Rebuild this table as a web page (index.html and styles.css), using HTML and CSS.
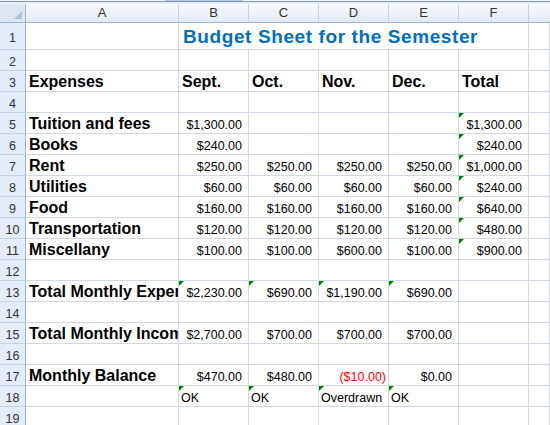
FILE: index.html
```html
<!DOCTYPE html>
<html lang="en">
<head>
<meta charset="utf-8">
<title>Budget Sheet for the Semester</title>
<link rel="stylesheet" href="styles.css">
</head>
<body>
<div class="topbar"><div class="topbar-seg"></div></div>
<div class="sheet">
  <div class="row colhdr">
    <div class="corner"></div>
    <div class="ch">A</div><div class="ch">B</div><div class="ch">C</div><div class="ch">D</div><div class="ch">E</div><div class="ch">F</div><div class="ch last"></div>
  </div>

  <div class="row r-title">
    <div class="rh">1</div><div class="c"></div>
    <div class="c title">Budget Sheet for the Semester</div>
    <div class="c"></div>
  </div>

  <div class="row">
    <div class="rh">2</div><div class="c"></div><div class="c"></div><div class="c"></div><div class="c"></div><div class="c"></div><div class="c"></div><div class="c"></div>
  </div>

  <div class="row">
    <div class="rh">3</div>
    <div class="c lbl">Expenses</div>
    <div class="c lbl">Sept.</div>
    <div class="c lbl">Oct.</div>
    <div class="c lbl">Nov.</div>
    <div class="c lbl">Dec.</div>
    <div class="c lbl">Total</div>
    <div class="c"></div>
  </div>

  <div class="row">
    <div class="rh">4</div><div class="c"></div><div class="c"></div><div class="c"></div><div class="c"></div><div class="c"></div><div class="c"></div><div class="c"></div>
  </div>

  <div class="row">
    <div class="rh">5</div>
    <div class="c lbl">Tuition and fees</div>
    <div class="c num">$1,300.00</div>
    <div class="c"></div><div class="c"></div><div class="c"></div>
    <div class="c num flag">$1,300.00</div>
    <div class="c"></div>
  </div>

  <div class="row">
    <div class="rh">6</div>
    <div class="c lbl">Books</div>
    <div class="c num">$240.00</div>
    <div class="c"></div><div class="c"></div><div class="c"></div>
    <div class="c num flag">$240.00</div>
    <div class="c"></div>
  </div>

  <div class="row">
    <div class="rh">7</div>
    <div class="c lbl">Rent</div>
    <div class="c num">$250.00</div>
    <div class="c num">$250.00</div>
    <div class="c num">$250.00</div>
    <div class="c num">$250.00</div>
    <div class="c num flag">$1,000.00</div>
    <div class="c"></div>
  </div>

  <div class="row">
    <div class="rh">8</div>
    <div class="c lbl">Utilities</div>
    <div class="c num">$60.00</div>
    <div class="c num">$60.00</div>
    <div class="c num">$60.00</div>
    <div class="c num">$60.00</div>
    <div class="c num flag">$240.00</div>
    <div class="c"></div>
  </div>

  <div class="row">
    <div class="rh">9</div>
    <div class="c lbl">Food</div>
    <div class="c num">$160.00</div>
    <div class="c num">$160.00</div>
    <div class="c num">$160.00</div>
    <div class="c num">$160.00</div>
    <div class="c num flag">$640.00</div>
    <div class="c"></div>
  </div>

  <div class="row">
    <div class="rh">10</div>
    <div class="c lbl">Transportation</div>
    <div class="c num">$120.00</div>
    <div class="c num">$120.00</div>
    <div class="c num">$120.00</div>
    <div class="c num">$120.00</div>
    <div class="c num flag">$480.00</div>
    <div class="c"></div>
  </div>

  <div class="row">
    <div class="rh">11</div>
    <div class="c lbl">Miscellany</div>
    <div class="c num">$100.00</div>
    <div class="c num">$100.00</div>
    <div class="c num">$600.00</div>
    <div class="c num">$100.00</div>
    <div class="c num flag">$900.00</div>
    <div class="c"></div>
  </div>

  <div class="row">
    <div class="rh">12</div><div class="c"></div><div class="c"></div><div class="c"></div><div class="c"></div><div class="c"></div><div class="c"></div><div class="c"></div>
  </div>

  <div class="row">
    <div class="rh">13</div>
    <div class="c lbl">Total Monthly Expenses</div>
    <div class="c num flag">$2,230.00</div>
    <div class="c num flag">$690.00</div>
    <div class="c num flag">$1,190.00</div>
    <div class="c num flag">$690.00</div>
    <div class="c"></div><div class="c"></div>
  </div>

  <div class="row">
    <div class="rh">14</div><div class="c"></div><div class="c"></div><div class="c"></div><div class="c"></div><div class="c"></div><div class="c"></div><div class="c"></div>
  </div>

  <div class="row">
    <div class="rh">15</div>
    <div class="c lbl">Total Monthly Income</div>
    <div class="c num">$2,700.00</div>
    <div class="c num">$700.00</div>
    <div class="c num">$700.00</div>
    <div class="c num">$700.00</div>
    <div class="c"></div><div class="c"></div>
  </div>

  <div class="row">
    <div class="rh">16</div><div class="c"></div><div class="c"></div><div class="c"></div><div class="c"></div><div class="c"></div><div class="c"></div><div class="c"></div>
  </div>

  <div class="row">
    <div class="rh">17</div>
    <div class="c lbl">Monthly Balance</div>
    <div class="c num">$470.00</div>
    <div class="c num">$480.00</div>
    <div class="c num neg">($10.00)</div>
    <div class="c num">$0.00</div>
    <div class="c"></div><div class="c"></div>
  </div>

  <div class="row">
    <div class="rh">18</div>
    <div class="c"></div>
    <div class="c txt flag">OK</div>
    <div class="c txt flag">OK</div>
    <div class="c txt flag">Overdrawn</div>
    <div class="c txt flag">OK</div>
    <div class="c"></div><div class="c"></div>
  </div>

  <div class="row">
    <div class="rh">19</div><div class="c"></div><div class="c"></div><div class="c"></div><div class="c"></div><div class="c"></div><div class="c"></div><div class="c"></div>
  </div>
</div>
</body>
</html>
```

FILE: styles.css
```css
:root {
  --cols: 26px 153px 70px 70px 70px 70px 70px 1fr;
  --grid: #d0d7e5;
  --hdr-edge: #9eb6ce;
  --hdr-sep: #c5d2e0;
}

html, body {
  margin: 0;
  padding: 0;
  background: #ffffff;
  overflow: hidden;
}

body {
  width: 550px;
  height: 425px;
  font-family: "Liberation Sans", Arial, sans-serif;
  color: #000;
}

.topbar {
  height: 4px;
  background: linear-gradient(#f4f6f9 0 1px, #8195ad 1px 2px, #e9eff7 2px 4px);
}

.topbar-seg {
  margin-left: 165px;
  width: 78px;
  height: 1px;
  background: #b9cbe0;
}

.sheet {
  display: flex;
  flex-direction: column;
}

.row {
  display: grid;
  grid-template-columns: var(--cols);
  height: 21px;
}

.r-title {
  height: 27px;
}

/* column header */
.colhdr {
  height: 19px;
}

.ch {
  box-sizing: border-box;
  border-right: 1px solid var(--hdr-sep);
  border-bottom: 1px solid var(--hdr-edge);
  background: linear-gradient(#f7f9fc, #e3e9f2);
  text-align: center;
  font-size: 13px;
  line-height: 18px;
  color: #333;
}

.ch.last {
  border-right: none;
}

.corner {
  box-sizing: border-box;
  position: relative;
  border-right: 1px solid var(--hdr-edge);
  border-bottom: 1px solid var(--hdr-edge);
  background: #dde6f1;
}

.corner::after {
  content: "";
  position: absolute;
  right: 3px;
  bottom: 3px;
  border-left: 8px solid transparent;
  border-bottom: 8px solid #b4c3d6;
}

/* row header */
.rh {
  box-sizing: border-box;
  display: flex;
  align-items: center;
  justify-content: center;
  padding-top: 4px;
  border-right: 1px solid var(--hdr-edge);
  border-bottom: 1px solid var(--hdr-sep);
  background: #e4ecf7;
  font-size: 12.5px;
  line-height: 14px;
  color: #333;
}

/* cells */
.c {
  box-sizing: border-box;
  position: relative;
  display: flex;
  align-items: flex-end;
  padding: 0 2px 1px;
  border-right: 1px solid var(--grid);
  border-bottom: 1px solid var(--grid);
  overflow: hidden;
  white-space: nowrap;
  font-size: 12.5px;
  line-height: 14px;
}

.title {
  grid-column: span 5;
  padding-left: 4px;
  color: #0070c0;
  font-size: 19px;
  font-weight: bold;
  line-height: 22px;
  letter-spacing: 0.6px;
}

.lbl {
  padding-left: 3px;
  font-size: 16px;
  font-weight: bold;
  line-height: 17px;
}

.num {
  justify-content: flex-end;
  padding-right: 6px;
}

.neg {
  color: #ff0000;
  padding-right: 2px;
}

.txt {
  padding-left: 2px;
}

.flag::before {
  content: "";
  position: absolute;
  left: 0;
  top: 0;
  border-top: 5px solid #008000;
  border-right: 5px solid transparent;
}
```
